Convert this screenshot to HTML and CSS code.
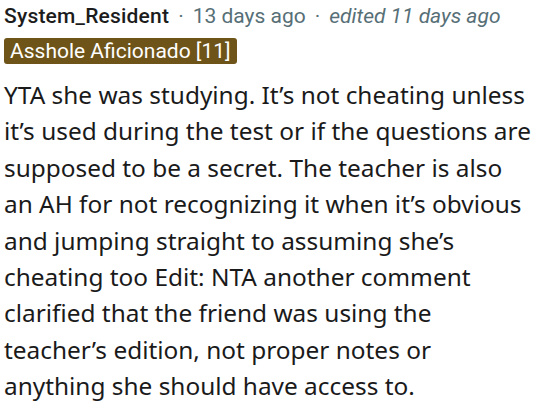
FILE: index.html
```html
<!DOCTYPE html>
<html>
<head>
<meta charset="utf-8">
<link rel="stylesheet" href="styles.css">
</head>
<body>
<div class="comment">
  <div class="meta">
    <span class="author">System_Resident</span>
    <span class="dot">·</span>
    <span class="time">13 days ago</span>
    <span class="dot">·</span>
    <span class="edited">edited 11 days ago</span>
  </div>
  <div class="flair-row"><span class="flair">Asshole Aficionado [11]</span></div>
  <p class="body">YTA she was studying. It’s not cheating unless it’s used during the test or if the questions are supposed to be a secret. The teacher is also an AH for not recognizing it when it’s obvious and jumping straight to assuming she’s cheating too Edit: NTA another comment clarified that the friend was using the teacher’s edition, not proper notes or anything she should have access to.</p>
</div>
</body>
</html>
```

FILE: styles.css
```css
html, body { margin: 0; padding: 0; background: #fff; }
.comment { padding: 0 8px 0 4px; }
.meta {
  font-family: "Roboto", "Liberation Sans", sans-serif;
  font-size: 21px;
  line-height: 26px;
  padding-top: 3px;
  color: #576f76;
  display: flex;
  gap: 9px;
  align-items: baseline;
  white-space: nowrap;
}
.author { color: #1c1c1c; font-weight: 500; letter-spacing: 0.2px; }
.edited { font-style: italic; }
.flair-row { margin-top: 9px; }
.flair {
  display: inline-block;
  font-family: "Roboto", "Liberation Sans", sans-serif;
  font-size: 21px;
  line-height: 26px;
  padding: 0 6px;
  background: #6e5419;
  color: #fff;
  border-radius: 3px;
}
.body {
  margin: 13px 0 0;
  font-family: "Noto Sans", sans-serif;
  font-size: 24.4px;
  line-height: 36.4px;
  color: #1a1a1b;
}
```
